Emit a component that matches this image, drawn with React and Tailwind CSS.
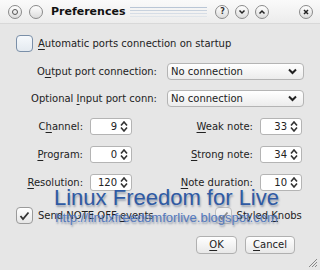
import React from 'react';

const U = ({ children }) => <span className="underline underline-offset-2">{children}</span>;

function Spin({ value }) {
  return (
    <div className="w-[42px] h-[17px] flex items-center justify-end bg-white border border-[#b4b4b4] rounded-[3px] pr-[3px]">
      <span className="mr-[3px]">{value}</span>
      <svg width="8" height="11" viewBox="0 0 8 11">
        <path d="M1 4.5 L4 1 L7 4.5 M1 6.5 L4 10 L7 6.5" fill="none" stroke="#333" strokeWidth="1.6" />
      </svg>
    </div>
  );
}

function Combo() {
  return (
    <div className="w-[137px] h-[17px] flex items-center justify-between bg-gradient-to-b from-white to-[#ececec] border border-[#b4b4b4] rounded-[4px] pl-[3px] pr-[6px]">
      <span>No connection</span>
      <svg width="9" height="7" viewBox="0 0 9 7">
        <path d="M1 1.5 L4.5 5 L8 1.5" fill="none" stroke="#222" strokeWidth="2" />
      </svg>
    </div>
  );
}

function Circle({ children }) {
  return (
    <div className="w-[14px] h-[14px] rounded-full border border-[#8a8a8a] bg-gradient-to-b from-white to-[#dcdcdc] flex items-center justify-center">
      {children}
    </div>
  );
}

function Check({ checked }) {
  return (
    <div className="w-[17px] h-[17px] rounded-[4px] border border-[#9a9a9a] bg-gradient-to-b from-white to-[#e6e6e6] flex items-center justify-center">
      {checked && (
        <svg width="11" height="10" viewBox="0 0 11 10">
          <path d="M1.5 5 L4 8 L9.5 1.5" fill="none" stroke="#333" strokeWidth="1.8" />
        </svg>
      )}
    </div>
  );
}

export default function App() {
  return (
    <div className="relative w-[320px] h-[270px] overflow-hidden bg-[#e6e6e6] text-[#222] text-[10px] leading-none" style={{ fontFamily: '"DejaVu Sans", sans-serif' }}>
      {/* title bar */}
      <div className="h-[24px] flex items-center bg-gradient-to-b from-[#fafafa] to-[#ececec] border-b border-[#d8d8d8]">
        <div className="ml-[8px]"><Circle><span className="w-[6px] h-[6px] rounded-full border border-[#555]" /></Circle></div>
        <div className="ml-[7px]"><Circle /></div>
        <span className="ml-[8px] font-bold text-[11px] text-[#111]">Preferences</span>
        <div className="ml-[5px] w-[77px] flex flex-col gap-[2px]">
          <div className="h-px bg-[#b9c6d6]" />
          <div className="h-px bg-[#c8d2de]" />
          <div className="h-px bg-[#d6dde6]" />
          <div className="h-px bg-[#e0e5ea]" />
        </div>
        <div className="ml-[8px] flex gap-[6px]">
          <Circle><span className="text-[8px] font-bold text-[#333]">?</span></Circle>
          <Circle>
            <svg width="8" height="6" viewBox="0 0 8 6"><path d="M1.5 1.5 L4 4 L6.5 1.5" fill="none" stroke="#222" strokeWidth="1.5" /></svg>
          </Circle>
          <Circle>
            <svg width="8" height="6" viewBox="0 0 8 6"><path d="M1.5 4.5 L4 2 L6.5 4.5" fill="none" stroke="#222" strokeWidth="1.5" /></svg>
          </Circle>
        </div>
        <div className="ml-[30px]">
          <Circle>
            <svg width="8" height="8" viewBox="0 0 8 8"><path d="M2 2 L6 6 M6 2 L2 6" stroke="#222" strokeWidth="1.5" /></svg>
          </Circle>
        </div>
      </div>

      {/* content */}
      <div className="pl-[16px] pt-[11px] flex flex-col">
        <div className="flex items-center gap-[5px]">
          <div className="w-[17px] h-[17px] rounded-[4px] border border-[#7a8fa8] bg-gradient-to-b from-[#f6f9fc] to-[#e4eaf0]" />
          <span><U>A</U>utomatic ports connection on startup</span>
        </div>

        <div className="mt-[11px] flex items-center">
          <span className="w-[141px] text-right">O<U>u</U>tput port connection:</span>
          <div className="ml-[10px]"><Combo /></div>
        </div>
        <div className="mt-[10px] flex items-center">
          <span className="w-[141px] text-right">Optional <U>I</U>nput port conn:</span>
          <div className="ml-[10px]"><Combo /></div>
        </div>

        <div className="mt-[11px] flex flex-col gap-[11px]">
          {[
            [<>C<U>h</U>annel:</>, '9', <><U>W</U>eak note:</>, '33'],
            [<><U>P</U>rogram:</>, '0', <><U>S</U>trong note:</>, '34'],
            [<><U>R</U>esolution:</>, '120', <><U>N</U>ote duration:</>, '10'],
          ].map((r, i) => (
            <div key={i} className="flex items-center">
              <span className="w-[67px] text-right">{r[0]}</span>
              <div className="ml-[7px]"><Spin value={r[1]} /></div>
              <span className="w-[121px] text-right">{r[2]}</span>
              <div className="ml-[7px]"><Spin value={r[3]} /></div>
            </div>
          ))}
        </div>

        <div className="mt-[16px] flex items-center">
          <Check checked />
          <span className="ml-[5px]">Send NOTE OFF <U>e</U>vents</span>
          <div className="ml-[61px] opacity-50"><Check checked /></div>
          <span className="ml-[5px]">Styled <U>K</U>nobs</span>
        </div>

        <div className="mt-[12px] flex items-center justify-end pr-[25px] gap-[8px]">
          <div className="w-[41px] h-[18px] flex items-center justify-center rounded-[4px] border border-[#b0b0b0] bg-gradient-to-b from-white to-[#e8e8e8]">
            <span><U>O</U>K</span>
          </div>
          <div className="w-[50px] h-[18px] flex items-center justify-center rounded-[4px] border border-[#b0b0b0] bg-gradient-to-b from-white to-[#e8e8e8]">
            <span><U>C</U>ancel</span>
          </div>
        </div>
      </div>

      {/* resize grip */}
      <svg className="absolute right-[2px] bottom-[2px]" width="12" height="12" viewBox="0 0 12 12">
        <path d="M11 3 L3 11 M11 6 L6 11 M11 9 L9 11" stroke="#888" strokeWidth="1" />
      </svg>

      {/* watermark */}
      <div className="absolute left-[54px] top-[187px] pointer-events-none flex flex-col items-center">
        <span className="text-[22px] leading-none text-[#2f5aa3] [text-shadow:1px_2px_2px_rgba(40,60,100,0.4)]" style={{ fontFamily: '"Liberation Sans", sans-serif' }}>Linux Freedom for Live</span>
        <span className="mt-[2px] text-[13px] leading-none text-[#5479bd] [text-shadow:1px_2px_2px_rgba(40,60,100,0.45)]" style={{ fontFamily: '"Liberation Sans", sans-serif' }}>http://linuxfreedomforlive.blogspot.com</span>
      </div>
    </div>
  );
}
